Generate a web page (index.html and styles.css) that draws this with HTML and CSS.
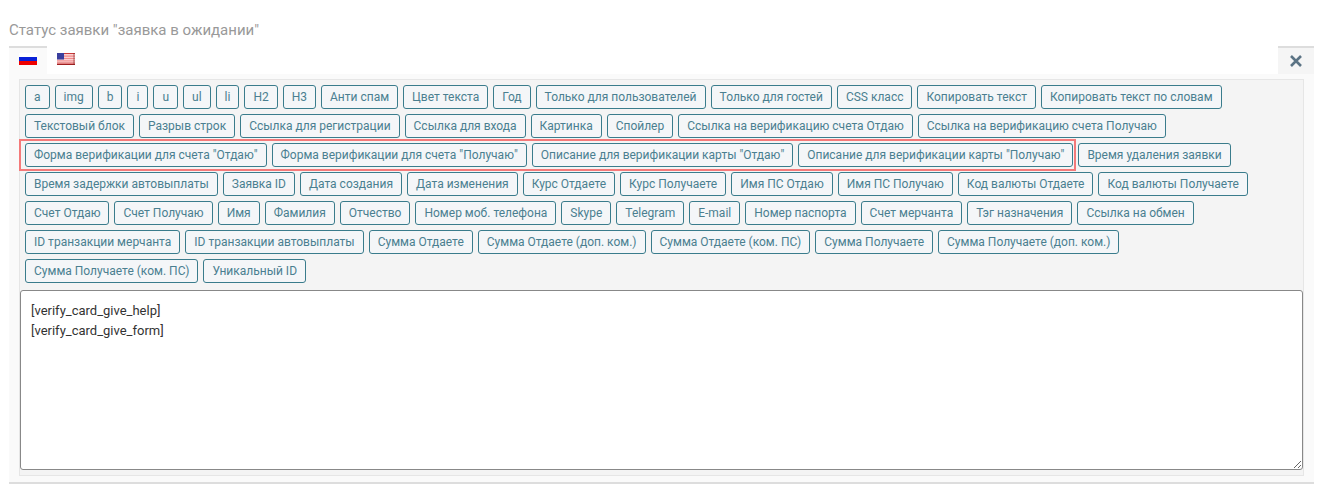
FILE: index.html
```html
<!DOCTYPE html>
<html lang="ru">
<head>
<meta charset="utf-8">
<title>Статус заявки</title>
<link rel="stylesheet" href="styles.css">
</head>
<body>
<div class="field">
  <div class="label">Статус заявки "заявка в ожидании"</div>
  <div class="panel">
    <div class="tabs">
      <div class="tab active">
        <svg class="flag" viewBox="0 0 18 12" aria-hidden="true"><rect width="18" height="4" fill="#fff"/><rect y="4" width="18" height="4" fill="#0a22d8"/><rect y="8" width="18" height="4" fill="#ee0000"/></svg>
      </div>
      <div class="tab">
        <svg class="flag" viewBox="0 0 18 12" aria-hidden="true"><rect width="18" height="12" fill="#fbd0d0"/><rect width="18" height="1" fill="#c93a3a"/><rect y="2.6" width="18" height="1" fill="#ef7c7c"/><rect y="5" width="18" height="1" fill="#f08a8a"/><rect y="7.4" width="18" height="1" fill="#f08a8a"/><rect y="9.6" width="18" height="1" fill="#d24a4a"/><rect y="11" width="18" height="1" fill="#9e2020"/><rect x="16" width="2" height="12" fill="#7a2020" opacity=".3"/><rect width="7" height="6.5" fill="#3a3f9e"/></svg>
      </div>
      <div class="close">
        <svg class="close-icon" viewBox="0 0 12 12" aria-hidden="true"><path d="M1 1l10 10M11 1L1 11"/></svg>
      </div>
    </div>
    <div class="body">
      <div class="editor">
        <div class="buttons">
          <button class="tag">a</button><button class="tag">img</button><button class="tag">b</button><button class="tag">i</button><button class="tag">u</button><button class="tag">ul</button><button class="tag">li</button><button class="tag">H2</button><button class="tag">H3</button><button class="tag">Анти спам</button><button class="tag">Цвет текста</button><button class="tag">Год</button><button class="tag">Только для пользователей</button><button class="tag">Только для гостей</button><button class="tag">CSS класс</button><button class="tag">Копировать текст</button><button class="tag">Копировать текст по словам</button>
          <button class="tag">Текстовый блок</button><button class="tag">Разрыв строк</button><button class="tag">Ссылка для регистрации</button><button class="tag">Ссылка для входа</button><button class="tag">Картинка</button><button class="tag">Спойлер</button><button class="tag">Ссылка на верификацию счета Отдаю</button><button class="tag">Ссылка на верификацию счета Получаю</button>
          <div class="highlight">
            <button class="tag">Форма верификации для счета "Отдаю"</button><button class="tag">Форма верификации для счета "Получаю"</button><button class="tag">Описание для верификации карты "Отдаю"</button><button class="tag">Описание для верификации карты "Получаю"</button>
          </div>
          <button class="tag">Время удаления заявки</button>
          <button class="tag">Время задержки автовыплаты</button><button class="tag">Заявка ID</button><button class="tag">Дата создания</button><button class="tag">Дата изменения</button><button class="tag">Курс Отдаете</button><button class="tag">Курс Получаете</button><button class="tag">Имя ПС Отдаю</button><button class="tag">Имя ПС Получаю</button><button class="tag">Код валюты Отдаете</button><button class="tag">Код валюты Получаете</button>
          <button class="tag">Счет Отдаю</button><button class="tag">Счет Получаю</button><button class="tag">Имя</button><button class="tag">Фамилия</button><button class="tag">Отчество</button><button class="tag">Номер моб. телефона</button><button class="tag">Skype</button><button class="tag">Telegram</button><button class="tag">E-mail</button><button class="tag">Номер паспорта</button><button class="tag">Счет мерчанта</button><button class="tag">Тэг назначения</button><button class="tag">Ссылка на обмен</button>
          <button class="tag">ID транзакции мерчанта</button><button class="tag">ID транзакции автовыплаты</button><button class="tag">Сумма Отдаете</button><button class="tag">Сумма Отдаете (доп. ком.)</button><button class="tag">Сумма Отдаете (ком. ПС)</button><button class="tag">Сумма Получаете</button><button class="tag">Сумма Получаете (доп. ком.)</button>
          <button class="tag">Сумма Получаете (ком. ПС)</button><button class="tag">Уникальный ID</button>
        </div>
        <textarea class="text" spellcheck="false">[verify_card_give_help]
[verify_card_give_form]</textarea>
      </div>
    </div>
  </div>
</div>
</body>
</html>
```

FILE: styles.css
```css
* { box-sizing: border-box; }
html, body { margin: 0; padding: 0; background: #fff; }
body { font-family: Roboto, "Liberation Sans", sans-serif; height: 490px; overflow: hidden; }
.field { padding: 21px 13px 0 9px; }
.label { font-size: 15px; line-height: 18px; color: #999; height: 25px; }
.panel { border-bottom: 2px solid #ddd; }
.tabs { display: flex; height: 28px; background: #fff; }
.tab { width: 38px; height: 28px; padding: 7px 10px 0; }
.tab.active { background: #fafafa; border-top: 2px solid #ddd; padding-top: 5px; }
.flag { display: block; width: 18px; height: 12px; filter: blur(.3px); }
.close { margin-left: auto; width: 36px; background: #f5f5f5; border-top: 2px solid #ddd; display: flex; align-items: center; justify-content: center; }
.close-icon { width: 12px; height: 12px; fill: none; stroke: #5b7384; stroke-width: 2.600; }
.body { background: #fafafa; padding: 5px 10px 6px; height: 408px; }
.editor { background: #f4f4f4; border: 1px solid #e6e6e6; height: 397px; }
.buttons { display: flex; flex-wrap: wrap; gap: 5px; padding: 5px 10px 0 5px; height: 210px; align-content: flex-start; }
.tag { height: 24px; padding: 0 8px; border: 1px solid #3a7c8c; border-radius: 3px; background: #f4f6f8; color: #4a7f90; font: 12px/22px Roboto, "Liberation Sans", sans-serif; white-space: nowrap; }
.highlight { position: relative; display: flex; gap: 5px; }
.highlight::after { content: ""; position: absolute; top: -4px; left: -6px; right: -3px; bottom: -4px; border: 2px solid #f47a7a; pointer-events: none; }
.text { display: block; width: 1283px; height: 180px; margin: 0; background: #fff; border: 1px solid #888; border-radius: 3px; padding: 10px; color: #333; font: 13px/20px Roboto, "Liberation Sans", sans-serif; outline: none; }
```
